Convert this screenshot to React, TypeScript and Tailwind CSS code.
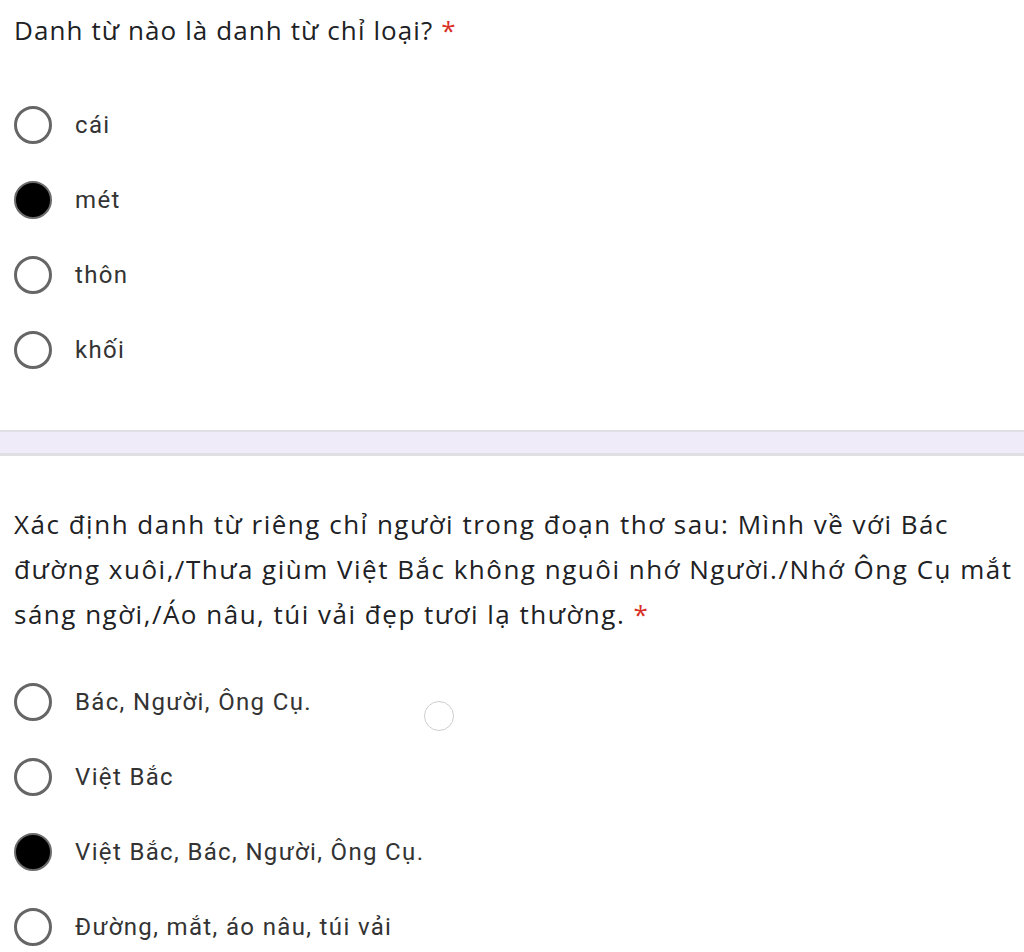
import React from "react";

const q1Options = ["cái", "mét", "thôn", "khối"];
const q2Options = [
  "Bác, Người, Ông Cụ.",
  "Việt Bắc",
  "Việt Bắc, Bác, Người, Ông Cụ.",
  "Đường, mắt, áo nâu, túi vải",
];

const Radio = ({ checked }: { checked: boolean }) =>
  checked ? (
    <div className="w-[38px] h-[38px] rounded-full border-[2px] border-[#6b6b6b] bg-black" />
  ) : (
    <div className="w-[38px] h-[38px] rounded-full border-[3px] border-[#666666] bg-white" />
  );

const OptionList = ({ options, selected }: { options: string[]; selected: number }) => (
  <div className="flex flex-col">
    {options.map((opt, i) => (
      <div key={i} className="h-[75px] flex items-center">
        <Radio checked={i === selected} />
        <span
          className="ml-[23px] text-[24px] tracking-[1.35px] text-[#333333]"
          style={{ fontFamily: "Roboto, 'Noto Sans', sans-serif" }}
        >
          {opt}
        </span>
      </div>
    ))}
  </div>
);

export default function App() {
  return (
    <div
      className="relative w-[1024px] h-[952px] bg-white overflow-hidden"
      style={{ fontFamily: "'Open Sans', 'Noto Sans', sans-serif" }}
    >
      <div className="pt-[8px] pl-[14px]">
        <div className="text-[26px] tracking-[1.1px] leading-[45px] text-[#202124]">
          Danh từ nào là danh từ chỉ loại? <span className="text-[#d93025]">*</span>
        </div>
        <div className="mt-[34px]">
          <OptionList options={q1Options} selected={1} />
        </div>
      </div>

      {/* section divider */}
      <div className="mt-[43px] h-[26px] bg-[#efebf8] border-t-[2px] border-b-[3px] border-[#e0dfe4]" />

      <div className="mt-[46px] pl-[14px]">
        <div className="text-[26px] tracking-[1.5px] leading-[45px] text-[#202124] whitespace-nowrap">
          <div>Xác định danh từ riêng chỉ người trong đoạn thơ sau: Mình về với Bác</div>
          <div>đường xuôi,/Thưa giùm Việt Bắc không nguôi nhớ Người./Nhớ Ông Cụ mắt</div>
          <div>
            sáng ngời,/Áo nâu, túi vải đẹp tươi lạ thường.<span className="text-[#d93025]"> *</span>
          </div>
        </div>
        <div className="mt-[27px]">
          <OptionList options={q2Options} selected={2} />
        </div>
      </div>

      {/* faint ghost circle */}
      <div className="absolute left-[424px] top-[701px] w-[30px] h-[30px] rounded-full border border-[#cfcfcf]" />
    </div>
  );
}
